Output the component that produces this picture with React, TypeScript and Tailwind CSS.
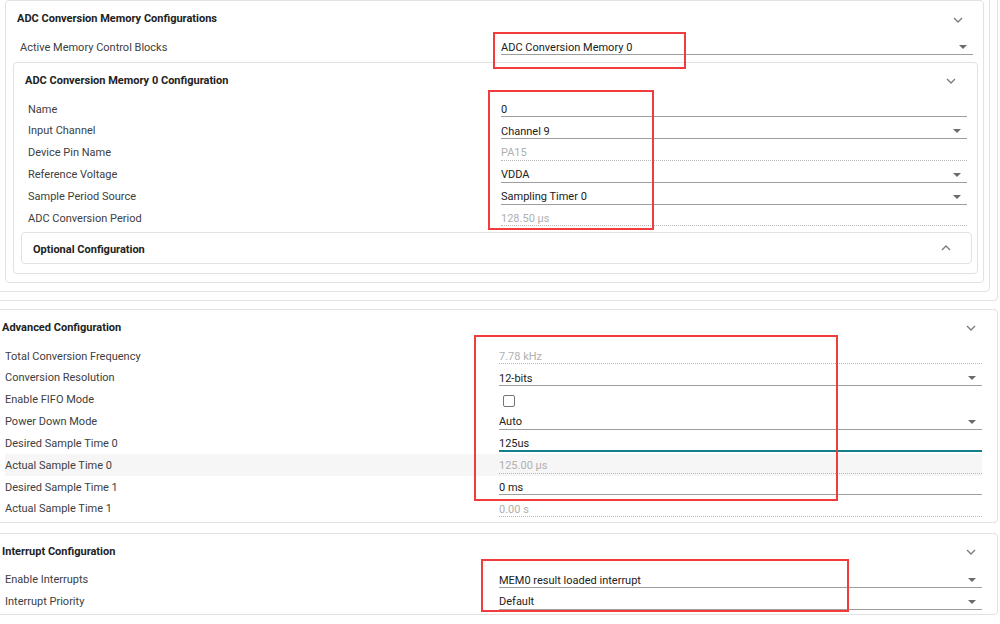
type Kind = 'select' | 'input' | 'readonly' | 'checkbox' | 'focus';

type Field = {
  label: string;
  value?: string;
  kind: Kind;
  highlight?: boolean;
};

const Chevron = ({ up }: { up?: boolean }) => (
  <svg width="10" height="6" viewBox="0 0 10 6" className={up ? 'rotate-180' : ''}>
    <path d="M1 1l4 4 4-4" fill="none" stroke="#7a7a7a" strokeWidth="1.3" />
  </svg>
);

const Caret = () => (
  <svg width="8" height="4" viewBox="0 0 8 4" className="mr-[6px] shrink-0">
    <path d="M0 0h8L4 4z" fill="#6b6b6b" />
  </svg>
);

function Value({ f }: { f: Field }) {
  if (f.kind === 'checkbox') {
    return (
      <div className="flex h-full items-center pl-[4px]">
        <span className="h-[12px] w-[12px] rounded-[2px] border-[1.5px] border-[#757575]" />
      </div>
    );
  }
  const line =
    f.kind === 'readonly'
      ? 'border-b border-dotted border-[#b8b8b8] text-[#b0b0b0]'
      : f.kind === 'focus'
        ? 'border-b-2 border-[#13808a] text-[#212121]'
        : 'border-b border-[#9e9e9e] text-[#212121]';
  return (
    <div className={`flex h-[15px] items-center justify-between leading-[13px] ${line}`}>
      <span>{f.value}</span>
      {f.kind === 'select' && <Caret />}
    </div>
  );
}

function Row({ f, labelW }: { f: Field; labelW: string }) {
  return (
    <div className={`flex h-[21.85px] items-center pt-[2px] ${f.highlight ? 'bg-[#f6f6f6]' : ''}`}>
      <div className={`${labelW} shrink-0 text-[#404040]`}>{f.label}</div>
      <div className="flex-1">
        <Value f={f} />
      </div>
    </div>
  );
}

const memory0: Field[] = [
  { label: 'Name', value: '0', kind: 'input' },
  { label: 'Input Channel', value: 'Channel 9', kind: 'select' },
  { label: 'Device Pin Name', value: 'PA15', kind: 'readonly' },
  { label: 'Reference Voltage', value: 'VDDA', kind: 'select' },
  { label: 'Sample Period Source', value: 'Sampling Timer 0', kind: 'select' },
  { label: 'ADC Conversion Period', value: '128.50 µs', kind: 'readonly' }
];

const advanced: Field[] = [
  { label: 'Total Conversion Frequency', value: '7.78 kHz', kind: 'readonly' },
  { label: 'Conversion Resolution', value: '12-bits', kind: 'select' },
  { label: 'Enable FIFO Mode', kind: 'checkbox' },
  { label: 'Power Down Mode', value: 'Auto', kind: 'select' },
  { label: 'Desired Sample Time 0', value: '125us', kind: 'focus' },
  { label: 'Actual Sample Time 0', value: '125.00 µs', kind: 'readonly', highlight: true },
  { label: 'Desired Sample Time 1', value: '0 ms', kind: 'input' },
  { label: 'Actual Sample Time 1', value: '0.00 s', kind: 'readonly' }
];

const interrupts: Field[] = [
  { label: 'Enable Interrupts', value: 'MEM0 result loaded interrupt', kind: 'select' },
  { label: 'Interrupt Priority', value: 'Default', kind: 'select' }
];

export default function App() {
  return (
    <div
      className="relative h-[624px] w-[1000px] overflow-hidden bg-white text-[11px]"
      style={{ fontFamily: 'Roboto, "Noto Sans", sans-serif' }}
    >
      {/* outer nested panels, edges run off the top and left */}
      <div className="-mt-[16px] -ml-[16px] mr-[2px] rounded-[4px] border border-[#e2e2e2] pt-[7px] pr-[7px] pb-[8px] pl-[6px]">
        <div className="rounded-[4px] border border-[#e2e2e2] pt-[7px] pr-[5px] pb-[8px] pl-[13px]">
          {/* ADC Conversion Memory Configurations */}
          <div className="rounded-[4px] border border-[#e2e2e2] pb-[8px]">
            <div className="flex h-[35px] items-center justify-between pt-[2px] pl-[11px] pr-[20px] font-bold text-[#222]">
              <span>ADC Conversion Memory Configurations</span>
              <Chevron />
            </div>
            <div className="pl-[14px] pr-[10px]">
              <Row f={{ label: 'Active Memory Control Blocks', value: 'ADC Conversion Memory 0', kind: 'select' }} labelW="w-[481px]" />
            </div>
            <div className="mt-[4px] mr-[5px] ml-[7px] rounded-[4px] border border-[#e2e2e2] pb-[9px]">
              <div className="flex h-[35px] items-center justify-between pt-[2px] pl-[11px] pr-[21px] font-bold text-[#222]">
                <span>ADC Conversion Memory 0 Configuration</span>
                <Chevron />
              </div>
              <div className="pl-[14px] pr-[10px]">
                {memory0.map((f) => (
                  <Row key={f.label} f={f} labelW="w-[473px]" />
                ))}
              </div>
              <div className="mt-[3px] mr-[5px] ml-[7px] flex h-[32px] items-center justify-between rounded-[4px] border border-[#e2e2e2] pt-[5px] pl-[11px] pr-[20px] font-bold text-[#222]">
                <span>Optional Configuration</span>
                <span className="-mt-[5px]">
                  <Chevron up />
                </span>
              </div>
            </div>
          </div>
        </div>
      </div>

      {/* Advanced Configuration */}
      <div className="mt-[8px] -ml-[16px] mr-[2px] rounded-[4px] border border-[#e2e2e2] pb-[2px]">
        <div className="flex h-[35px] items-center justify-between pt-[2px] pl-[17px] pr-[21px] font-bold text-[#222]">
          <span>Advanced Configuration</span>
          <Chevron />
        </div>
        <div className="pr-[8px]">
          {advanced.map((f) => (
            <div key={f.label} className="pl-[20px] pr-[7px]">
              <Row f={f} labelW="w-[494px]" />
            </div>
          ))}
        </div>
      </div>

      {/* Interrupt Configuration */}
      <div className="mt-[10px] -ml-[16px] mr-[2px] rounded-[4px] border border-[#e2e2e2] pb-[2px]">
        <div className="flex h-[35px] items-center justify-between pt-[2px] pl-[17px] pr-[21px] font-bold text-[#222]">
          <span>Interrupt Configuration</span>
          <Chevron />
        </div>
        <div className="pl-[20px] pr-[15px]">
          {interrupts.map((f) => (
            <Row key={f.label} f={f} labelW="w-[494px]" />
          ))}
        </div>
      </div>

      {/* annotation boxes */}
      <div className="pointer-events-none absolute left-[493px] top-[32px] h-[37px] w-[193px] border-2 border-[#f03c3c]" />
      <div className="pointer-events-none absolute left-[488px] top-[90px] h-[140px] w-[166px] border-2 border-[#f03c3c]" />
      <div className="pointer-events-none absolute left-[474px] top-[335px] h-[166px] w-[364px] border-2 border-[#f03c3c]" />
      <div className="pointer-events-none absolute left-[481px] top-[559px] h-[53px] w-[368px] border-2 border-[#f03c3c]" />
    </div>
  );
}
